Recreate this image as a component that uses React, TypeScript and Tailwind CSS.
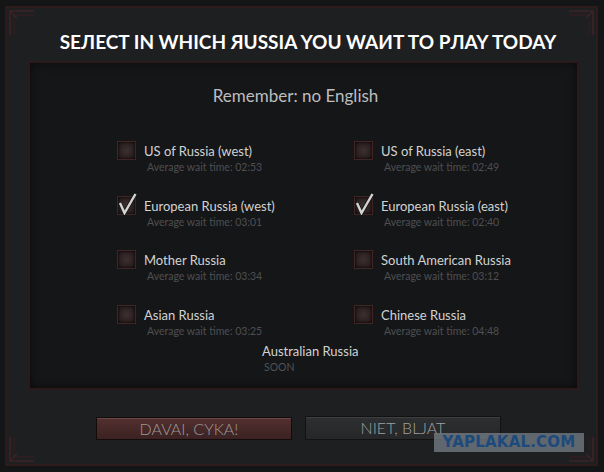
import React from "react";

type Server = { name: string; wait: string; checked?: boolean };

const left: Server[] = [
  { name: "US of Russia (west)", wait: "02:53" },
  { name: "European Russia (west)", wait: "03:01", checked: true },
  { name: "Mother Russia", wait: "03:34" },
  { name: "Asian Russia", wait: "03:25" },
];

const right: Server[] = [
  { name: "US of Russia (east)", wait: "02:49" },
  { name: "European Russia (east)", wait: "02:40", checked: true },
  { name: "South American Russia", wait: "03:12" },
  { name: "Chinese Russia", wait: "04:48" },
];

function Check({ checked }: { checked?: boolean }) {
  return (
    <div className="relative mt-[-1px] h-[17px] w-[17px] shrink-0 bg-[radial-gradient(circle,#3d3031_0%,#2c2021_60%,#201617_100%)] shadow-[0_0_0_1px_#402426,inset_0_0_3px_rgba(0,0,0,0.9)]">
      {checked && (
        <svg className="absolute left-[0px] top-[-4px]" width="20" height="22" viewBox="0 0 20 22">
          <path d="M2 10 L6.5 20 L17.5 1" fill="none" stroke="#1a1a1a" strokeWidth="4" />
          <path d="M2 10 L6.5 20 L17.5 1" fill="none" stroke="#d4d4d4" strokeWidth="2.4" />
        </svg>
      )}
    </div>
  );
}

function Row({ s }: { s: Server }) {
  return (
    <div className="flex items-start">
      <Check checked={s.checked} />
      <div className="ml-[9px] flex flex-col">
        <span className="text-[13px] leading-[16px] text-[#d2d2d2]">{s.name}</span>
        <span className="ml-[3px] mt-[1px] text-[10.5px] leading-[14px] text-[#4e4f51]">
          Average wait time: {s.wait}
        </span>
      </div>
    </div>
  );
}

function Corner({ className }: { className: string }) {
  return (
    <svg className={`absolute ${className}`} width="26" height="26" viewBox="0 0 26 26">
      <path d="M1 25 V1 H25" fill="none" stroke="#4a2628" strokeWidth="1" />
      <path d="M5 25 V5 H25" fill="none" stroke="#3a1f21" strokeWidth="1" />
      <path d="M1 1 L8 8" fill="none" stroke="#4a2628" strokeWidth="1" />
    </svg>
  );
}

export default function App() {
  return (
    <div
      className="relative h-[472px] w-[604px] overflow-hidden bg-[#141517] pb-[6px] pl-[5px] pr-[6px] pt-[6px]"
      style={{ fontFamily: 'Lato, "Open Sans", sans-serif' }}
    >
      <div className="relative flex h-full flex-col border-2 border-[#2e1c1d] bg-[#1e1f21]">
        <Corner className="left-[2px] top-[2px]" />
        <Corner className="right-[2px] top-[2px] -scale-x-100" />
        <Corner className="bottom-[2px] left-[2px] -scale-y-100" />
        <Corner className="bottom-[2px] right-[2px] -scale-100" />

        {/* title */}
        <div className="flex h-[53px] justify-center pl-[13px] pt-[22px]">
          <h1 className="text-[19px] font-bold leading-[24px] text-white">
            SEЛECT IN WHICH ЯUSSIA YOU WAИT TO PЛAY TODAY
          </h1>
        </div>

        {/* server list panel */}
        <div className="ml-[21px] mr-[17px] h-[329px] border-2 border-[#2a1a1b] bg-[#151618] shadow-[inset_0_0_10px_rgba(0,0,0,0.6)]">
          <p className="pr-[16px] pt-[23px] text-center text-[17px] leading-[20px] text-[#bdbdbd]">
            Remember: no English
          </p>
          <div className="mt-[37px] grid grid-cols-[237px_1fr] gap-y-[23.5px] pl-[88px]">
            {left.map((s, i) => (
              <React.Fragment key={i}>
                <Row s={s} />
                <Row s={right[i]} />
              </React.Fragment>
            ))}
          </div>
          <div className="mt-[5.5px] flex flex-col pl-[232px]">
            <span className="text-[13px] leading-[16px] text-[#d2d2d2]">Australian Russia</span>
            <span className="ml-[2px] mt-[1px] text-[10.5px] leading-[14px] text-[#505153]">SOON</span>
          </div>
        </div>

        {/* buttons */}
        <div className="mt-[27px] flex justify-center gap-[13px] pr-[6px]">
          <button className="h-[23px] w-[196px] border border-[#140b0b] bg-gradient-to-b from-[#53302f] to-[#3b2222] pr-[10px] text-[16px] font-light leading-[21px] text-[#9e9a9a] shadow-[inset_0_1px_0_rgba(255,255,255,0.12)]">
            DAVAI, CYKA!
          </button>
          <button className="mt-[-1px] h-[24px] w-[196px] border border-[#121212] bg-gradient-to-b from-[#2e2f31] to-[#262729] text-[16px] font-light leading-[22px] text-[#a0a0a0] shadow-[inset_0_1px_0_rgba(255,255,255,0.08)]">
            NIET, BLJAT
          </button>
        </div>
      </div>

      {/* watermark */}
      <div className="absolute left-[434px] top-[433px] flex h-[19px] w-[150px] items-center justify-center bg-[rgba(120,128,136,0.75)]">
        <span
          className="text-[15px] font-bold leading-none tracking-[0.2px] text-[#1d4a7c]"
          style={{ fontFamily: '"DejaVu Sans", sans-serif' }}
        >
          YAPLAKAL.COM
        </span>
      </div>
    </div>
  );
}
